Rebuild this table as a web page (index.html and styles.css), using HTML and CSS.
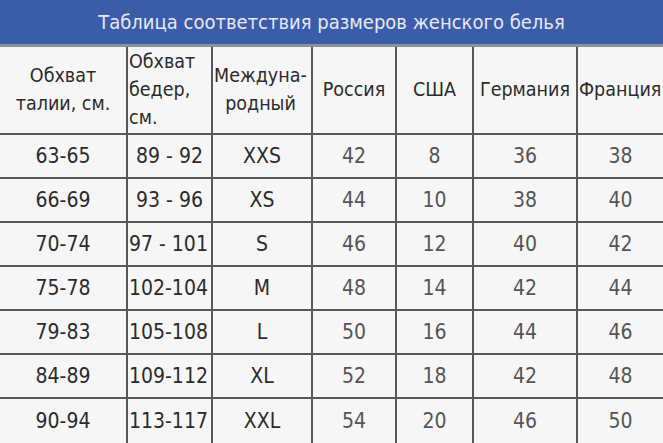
FILE: index.html
```html
<!DOCTYPE html>
<html lang="ru">
<head>
<meta charset="utf-8">
<link rel="stylesheet" href="styles.css">
</head>
<body>
<div class="sheet">
  <div class="title">Таблица соответствия размеров женского белья</div>
  <table class="sizes">
    <colgroup>
      <col class="c1"><col class="c2"><col class="c3"><col class="c4"><col class="c5"><col class="c6"><col class="c7">
    </colgroup>
    <tr class="head">
      <td>Обхват<br>талии, см.</td>
      <td class="left">Обхват<br>бедер,<br>см.</td>
      <td class="left">Междуна-<br>&nbsp;&nbsp;родный</td>
      <td>Россия</td>
      <td>США</td>
      <td>Германия</td>
      <td class="left">Франция</td>
    </tr>
    <tr><td>63-65</td><td>89 - 92</td><td>XXS</td><td class="soft">42</td><td class="soft">8</td><td class="soft">36</td><td class="soft">38</td></tr>
    <tr><td>66-69</td><td>93 - 96</td><td>XS</td><td class="soft">44</td><td class="soft">10</td><td class="soft">38</td><td class="soft">40</td></tr>
    <tr><td>70-74</td><td class="left">97 - 101</td><td>S</td><td class="soft">46</td><td class="soft">12</td><td class="soft">40</td><td class="soft">42</td></tr>
    <tr><td>75-78</td><td class="left">102-104</td><td>M</td><td class="soft">48</td><td class="soft">14</td><td class="soft">42</td><td class="soft">44</td></tr>
    <tr><td>79-83</td><td class="left">105-108</td><td>L</td><td class="soft">50</td><td class="soft">16</td><td class="soft">44</td><td class="soft">46</td></tr>
    <tr><td>84-89</td><td class="left">109-112</td><td>XL</td><td class="soft">52</td><td class="soft">18</td><td class="soft">42</td><td class="soft">48</td></tr>
    <tr class="last"><td>90-94</td><td class="left">113-117</td><td>XXL</td><td class="soft">54</td><td class="soft">20</td><td class="soft">46</td><td class="soft">50</td></tr>
  </table>
</div>
</body>
</html>
```
FILE: styles.css
```css
html, body {
  margin: 0;
  padding: 0;
  background: #f6f6f6;
}
.sheet {
  width: 663px;
  height: 443px;
  overflow: hidden;
  font-family: "DejaVu Sans Condensed", "DejaVu Sans", sans-serif;
  color: #2b2b2b;
}
.title {
  height: 44px;
  line-height: 44px;
  background: #3b5ca8;
  color: #e6e9f2;
  text-align: center;
  font-size: 20px;
  border-bottom: 3px solid #8b929c;
  box-sizing: content-box;
}
.sizes {
  width: 663px;
  table-layout: fixed;
  border-collapse: separate;
  border-spacing: 0;
}
.c1 { width: 128px; }
.c2 { width: 85px; }
.c3 { width: 100px; }
.c4 { width: 84px; }
.c5 { width: 77px; }
.c6 { width: 104px; }
.c7 { width: 85px; }
.sizes td {
  box-sizing: border-box;
  height: 44px;
  padding: 0;
  text-align: center;
  font-size: 21px;
  border-right: 2px solid #575757;
  border-bottom: 2px solid #575757;
  white-space: nowrap;
  overflow: hidden;
}
.sizes td:last-child { border-right: none; }
.sizes tr.last td { border-bottom: none; }
.sizes tr.head td {
  height: 88px;
  line-height: 28px;
  font-size: 19.5px;
}
.sizes td.left { text-align: left; padding-left: 1px; }
.sizes td.soft { color: #555; }
```
